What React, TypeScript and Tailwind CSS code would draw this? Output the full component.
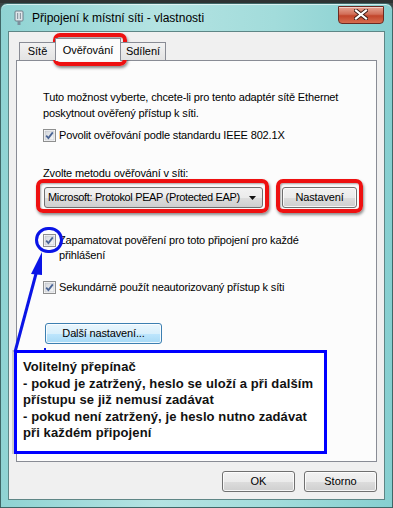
import React from 'react';

const ui = { fontFamily: '"Liberation Sans", Arial, sans-serif' };

function Check() {
  return (
    <svg width="13" height="13" viewBox="0 0 13 13" className="shrink-0">
      <defs>
        <linearGradient id="cbg" x1="0" y1="0" x2="1" y2="1">
          <stop offset="0" stopColor="#d2d5da" />
          <stop offset="1" stopColor="#f8f9fa" />
        </linearGradient>
      </defs>
      <rect x="0.5" y="0.5" width="12" height="12" fill="#fff" stroke="#8e8f8f" />
      <rect x="2" y="2" width="9" height="9" fill="url(#cbg)" stroke="#b8bcc2" strokeWidth="0.6" />
      <path d="M3.2 6.6 L5.4 9 L9.8 3.4" fill="none" stroke="#4a6494" strokeWidth="1.8" />
    </svg>
  );
}

function WinButton({ children, className = '', blue = false }: { children: React.ReactNode; className?: string; blue?: boolean }) {
  return (
    <div
      className={`flex items-center justify-center rounded-[3px] border text-[11px] text-black ${
        blue
          ? 'border-[#3c7fb1] bg-[linear-gradient(#eaf6fd_0%,#d9f0fc_50%,#bee6fd_51%,#a7d9f5_100%)]'
          : 'border-[#707070] bg-[linear-gradient(#f2f2f2_0%,#ebebeb_50%,#dddddd_51%,#cfcfcf_100%)]'
      } shadow-[inset_0_0_0_1px_rgba(255,255,255,0.8)] ${className}`}
    >
      {children}
    </div>
  );
}

function RedBox({ className }: { className: string }) {
  return (
    <div
      className={`absolute rounded-[7px] border-[4px] border-[#ee1111] shadow-[1px_2px_3px_rgba(0,0,0,0.45),inset_1px_1px_2px_rgba(0,0,0,0.35)] ${className}`}
    />
  );
}

export default function App() {
  return (
    <div className="relative h-[508px] w-[393px] overflow-hidden bg-[#3b4444]" style={ui}>
      <div className="h-[3px] bg-[#2e3333]" />
      {/* window */}
      <div className="flex h-[505px] flex-col rounded-t-[7px] border border-[#3f6767] bg-[linear-gradient(90deg,#8fd3d3_0%,#b4e3e2_40%,#a2dcdb_70%,#86cfd0_100%)] shadow-[inset_0_1px_0_rgba(255,255,255,0.6)]">
        {/* title bar */}
        <div className="flex h-[27px] shrink-0 items-center">
          <svg width="10" height="16" viewBox="0 0 10 16" className="ml-[13px] mr-[8px]">
            <rect x="1" y="1" width="8" height="10" rx="1" fill="#dfe6ea" stroke="#6f7f8a" />
            <rect x="3" y="3" width="1.2" height="6" fill="#8c9aa4" />
            <rect x="5.8" y="3" width="1.2" height="6" fill="#8c9aa4" />
            <rect x="3.5" y="11" width="3" height="4" fill="#7b8f9c" />
          </svg>
          <span className="text-[12px] text-black">Připojení k místní síti - vlastnosti</span>
          <div className="ml-auto mr-[8px] -mt-[6px] flex h-[18px] w-[46px] items-center justify-center rounded-b-[4px] border border-[#6b2a22] bg-[linear-gradient(#e6a593_0%,#d26e58_45%,#c2452b_55%,#d66d4f_100%)] shadow-[inset_0_1px_0_rgba(255,255,255,0.5)]">
            <svg width="14" height="11" viewBox="0 0 14 11">
              <path d="M2 1.5 L12 9.5 M12 1.5 L2 9.5" stroke="#3a1a14" strokeWidth="4" strokeLinecap="square" />
              <path d="M2 1.5 L12 9.5 M12 1.5 L2 9.5" stroke="#ffffff" strokeWidth="2.2" strokeLinecap="square" />
            </svg>
          </div>
        </div>

        {/* client */}
        <div className="mx-[7px] mb-[7px] flex flex-1 flex-col border border-[#5e8686] bg-[#f0f0f0] px-[7px] pt-[5px]">
          {/* tabs */}
          <div className="relative z-10 flex h-[23px] items-end pl-[3px] text-[11px] text-black">
            <div className="flex h-[18px] w-[37px] items-center justify-center border border-b-0 border-[#898c95] bg-[linear-gradient(#f2f2f2,#e3e3e3)]">Sítě</div>
            <div className="-mx-[1px] -mb-[1px] flex h-[23px] w-[66px] items-center justify-center border border-b-0 border-[#898c95] bg-[#fcfcfc]">Ověřování</div>
            <div className="flex h-[18px] w-[46px] items-center justify-center border border-b-0 border-[#898c95] bg-[linear-gradient(#f2f2f2,#e3e3e3)]">Sdílení</div>
          </div>
          {/* tab panel */}
          <div className="flex h-[402px] flex-col border border-[#898c95] bg-[#fcfcfc] pl-[26px] pt-[28px] text-[11px] tracking-[-0.15px] text-black">
            <p className="w-[312px] leading-[16px]">
              Tuto možnost vyberte, chcete-li pro tento adaptér sítě Ethernet poskytnout ověřený přístup k síti.
            </p>
            <div className="mt-[8px] flex h-[13px] items-center gap-[3px]">
              <Check />
              <span>Povolit ověřování podle standardu IEEE 802.1X</span>
            </div>
            <div className="mt-[24px] h-[14px] leading-[14px]">Zvolte metodu ověřování v síti:</div>
            <div className="mt-[7px] flex items-center">
              <div className="ml-[1px] flex h-[21px] w-[219px] items-center rounded-[3px] border border-[#707070] bg-[linear-gradient(#f2f2f2_0%,#ebebeb_50%,#dddddd_51%,#cfcfcf_100%)] pl-[3px] pr-[6px]">
                <span className="flex-1 whitespace-nowrap tracking-[-0.35px]">Microsoft: Protokol PEAP (Protected EAP)</span>
                <svg width="7" height="4" viewBox="0 0 7 4" className="ml-[4px] shrink-0">
                  <path d="M0 0 L7 0 L3.5 4 Z" fill="#111" />
                </svg>
              </div>
              <WinButton className="ml-[19px] h-[21px] w-[75px]">Nastavení</WinButton>
            </div>
            <div className="mt-[25px] flex items-start gap-[3px]">
              <div className="mt-[1px]">
                <Check />
              </div>
              <span className="w-[285px] leading-[15px]">Zapamatovat pověření pro toto připojení pro každé přihlášení</span>
            </div>
            <div className="mt-[18px] flex h-[13px] items-center gap-[3px]">
              <Check />
              <span>Sekundárně použít neautorizovaný přístup k síti</span>
            </div>
            <WinButton blue className="ml-[2px] mt-[29px] h-[21px] w-[117px]">Další nastavení...</WinButton>
          </div>
          {/* dialog buttons */}
          <div className="mt-[9px] flex justify-end gap-[9px]">
            <WinButton className="h-[21px] w-[73px]">OK</WinButton>
            <WinButton className="h-[21px] w-[73px]">Storno</WinButton>
          </div>
        </div>
      </div>

      {/* annotations */}
      <RedBox className="left-[53px] top-[33px] h-[33px] w-[74px]" />
      <RedBox className="left-[36px] top-[179px] h-[34px] w-[233px]" />
      <RedBox className="left-[276px] top-[179px] h-[34px] w-[87px]" />
      <div className="absolute left-[35px] top-[227px] h-[26px] w-[28px] rounded-full border-[3px] border-[#0a14e6]" />
      <svg className="absolute left-0 top-0" width="393" height="508" viewBox="0 0 393 508">
        <path d="M15 352 L37 270" stroke="#0a14e6" strokeWidth="3" fill="none" />
        <path d="M42 252 L31 274 L42 275 Z" fill="#0a14e6" />
        <path d="M45 348 L45 352" stroke="#0a14e6" strokeWidth="2" />
      </svg>
      <div className="absolute left-[14px] top-[350px] h-[104px] w-[313px] border-[3px] border-[#0000ff] bg-white pl-[6px] pt-[6px] text-[13px] font-bold leading-[16.5px] tracking-[0.1px] text-[#111] shadow-[-2px_0_0_rgba(0,0,0,0.15)]">
        <div>Volitelný přepínač</div>
        <div>- pokud je zatržený, heslo se uloží a při dalším</div>
        <div>přístupu se již nemusí zadávat</div>
        <div>- pokud není zatržený, je heslo nutno zadávat</div>
        <div>při každém připojení</div>
      </div>
    </div>
  );
}
